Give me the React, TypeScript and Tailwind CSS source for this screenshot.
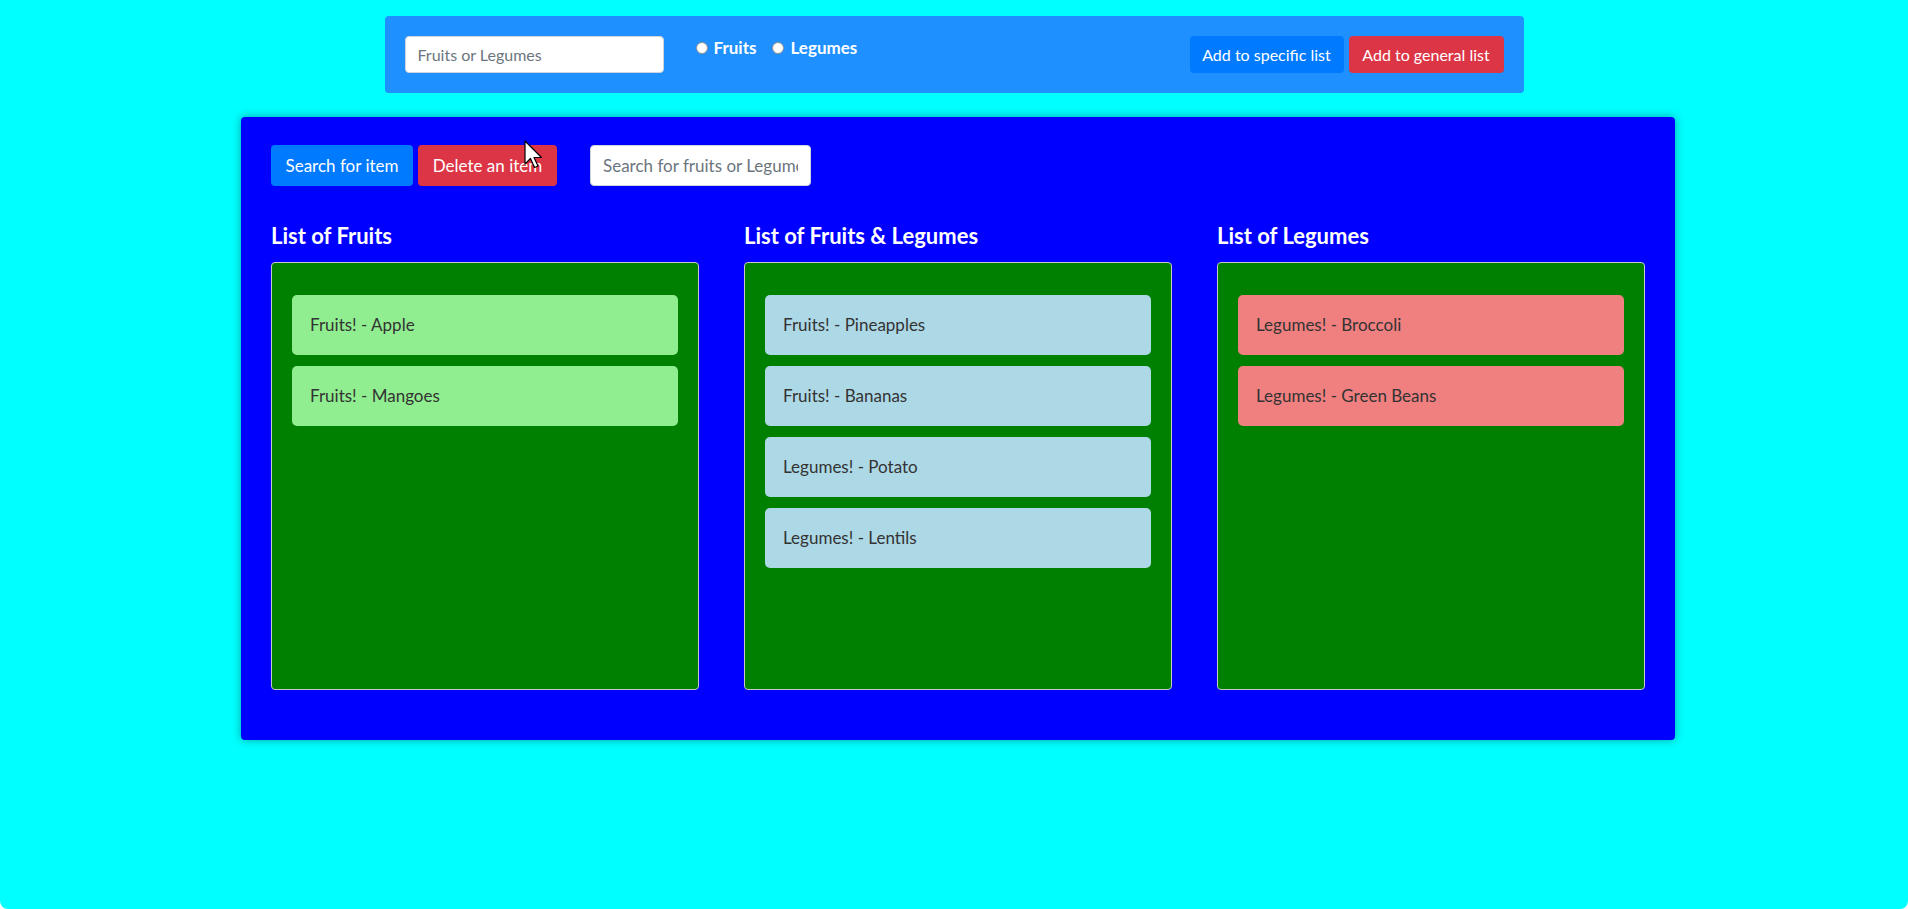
import React from "react";

const font = { fontFamily: '"Segoe UI", Lato, "Noto Sans", sans-serif' };

function Item({ text, bg }: { text: string; bg: string }) {
  return (
    <div className={`h-[60px] rounded-[5px] px-[18px] flex items-center text-[17px] text-[#333333] ${bg}`}>
      {text}
    </div>
  );
}

function Column({ title, items, bg }: { title: string; items: string[]; bg: string }) {
  return (
    <div className="flex flex-col">
      <h2 className="h-[24px] leading-[24px] text-[22px] font-bold text-white">{title}</h2>
      <div className="mt-[14px] h-[428px] border border-[#c8c8c8] bg-[#008000] rounded-[4px] px-[20px] pt-[32px] flex flex-col gap-[11px]">
        {items.map((t) => (
          <Item key={t} text={t} bg={bg} />
        ))}
      </div>
    </div>
  );
}

export default function App() {
  return (
    <div className="min-h-screen bg-white" style={font}>
      <div className="relative h-[909px] bg-[#00ffff] rounded-b-[8px] pt-[16px]">
        {/* top bar */}
        <div className="mx-auto w-[1139px] h-[77px] bg-[#1e90ff] rounded-[4px] px-[20px] pt-[20px] flex items-start">
          <input
            className="w-[259px] h-[37px] bg-white rounded-[4px] border border-[#ced4da] px-[12px] text-[16px] text-[#495057] placeholder:text-[#6c757d] outline-none"
            placeholder="Fruits or Legumes"
          />
          <div className="ml-[32px] mt-0 flex items-center text-[17px] font-bold text-white h-[24px]">
            <span className="w-[12px] h-[12px] rounded-full bg-white border border-[#8f8f8f]" />
            <span className="ml-[6px]">Fruits</span>
            <span className="ml-[16px] w-[12px] h-[12px] rounded-full bg-white border border-[#8f8f8f]" />
            <span className="ml-[6px]">Legumes</span>
          </div>
          <div className="ml-auto flex gap-[5px]">
            <button className="w-[154px] h-[37px] rounded-[4px] bg-[#007bff] text-white text-[16px]">
              Add to specific list
            </button>
            <button className="w-[155px] h-[37px] rounded-[4px] bg-[#dc3545] text-white text-[16px]">
              Add to general list
            </button>
          </div>
        </div>

        {/* main panel */}
        <div className="mt-[24px] ml-[241px] w-[1434px] bg-[#0000ff] rounded-[4px] px-[30px] pt-[28px] pb-[50px] shadow-[0_0_10px_rgba(0,0,0,0.35)]">
          <div className="flex items-center">
            <button className="w-[142px] h-[41px] rounded-[4px] bg-[#007bff] text-white text-[17px]">
              Search for item
            </button>
            <button className="ml-[5px] w-[139px] h-[41px] rounded-[4px] bg-[#dc3545] text-white text-[17px]">
              Delete an item
            </button>
            <input
              className="ml-[33px] w-[221px] h-[41px] bg-white rounded-[4px] border border-[#ced4da] px-[12px] text-[17px] text-[#495057] placeholder:text-[#6c757d] outline-none"
              placeholder="Search for fruits or Legumes"
            />
          </div>
          <div className="mt-[38px] grid grid-cols-3 gap-[45px]">
            <Column title="List of Fruits" items={["Fruits! - Apple", "Fruits! - Mangoes"]} bg="bg-[#90ee90]" />
            <Column
              title="List of Fruits & Legumes"
              items={["Fruits! - Pineapples", "Fruits! - Bananas", "Legumes! - Potato", "Legumes! - Lentils"]}
              bg="bg-[#add8e6]"
            />
            <Column title="List of Legumes" items={["Legumes! - Broccoli", "Legumes! - Green Beans"]} bg="bg-[#f08080]" />
          </div>
        </div>

        {/* mouse cursor */}
        <svg className="absolute left-[524px] top-[140px]" width="20" height="30" viewBox="0 0 20 30">
          <path d="M1 1 L1 24 L6.5 18.5 L10.5 27.5 L14 26 L10 17.5 L17.5 17.5 Z" fill="white" stroke="black" strokeWidth="1.2" strokeLinejoin="round" />
        </svg>
      </div>
    </div>
  );
}
